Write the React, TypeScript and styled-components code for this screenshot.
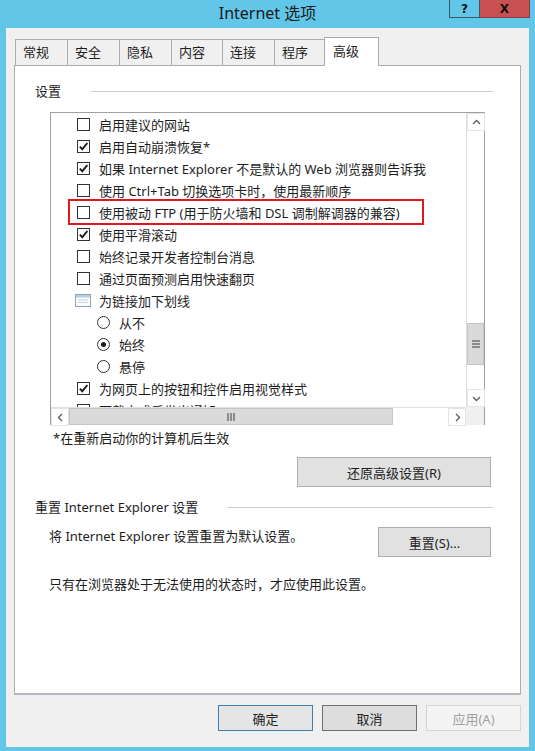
import React from "react";
import styled, { createGlobalStyle, css } from "styled-components";

const GlobalStyle = createGlobalStyle`
  html, body {
    margin: 0;
    padding: 0;
    background: #62c6e9;
  }
  body {
    font-family: "Noto Sans", "Noto Sans CJK SC", sans-serif;
    font-size: 13px;
    color: #1e1e1e;
  }
`;

const Frame = styled.div`
  width: 535px;
  height: 751px;
  background: #62c6e9;
  display: flex;
  flex-direction: column;
  overflow: hidden;
`;

const TitleBar = styled.div`
  height: 28px;
  display: grid;
  grid-template-columns: 1fr auto 1fr;
  align-items: start;
`;

const Title = styled.div`
  grid-column: 2;
  font-size: 16px;
  line-height: 24px;
  color: #1a1a1a;
  padding-top: 1px;
`;

const CaptionButtons = styled.div`
  grid-column: 3;
  justify-self: end;
  display: flex;
  margin-right: 5px;
`;

const CaptionButton = styled.div<{ $close?: boolean }>`
  height: 18px;
  width: ${(p) => (p.$close ? "50px" : "31px")};
  box-sizing: border-box;
  display: flex;
  align-items: center;
  justify-content: center;
  font-family: "DejaVu Sans", sans-serif;
  font-weight: bold;
  font-size: 12px;
  color: #111;
  border: 1px solid #3a5a6a;
  border-top: none;
  ${(p) =>
    p.$close
      ? css`
          background: #c75050;
          border-color: #8a3a3a;
          border-left: none;
        `
      : css`
          background: #62c6e9;
        `}
`;

const Body = styled.div`
  flex: 1;
  margin: 0 6px 4px 6px;
  background: #f0f0f0;
  padding: 10px 8px 0 8px;
  display: flex;
  flex-direction: column;
`;

const TabStrip = styled.div`
  display: flex;
  align-items: flex-end;
  height: 27px;
  padding-left: 1px;
  position: relative;
  z-index: 1;
`;

const Tab = styled.div<{ $active?: boolean; $w: number }>`
  box-sizing: border-box;
  width: ${(p) => p.$w}px;
  height: 26px;
  margin-bottom: 0;
  padding-left: 7px;
  line-height: 24px;
  border: 1px solid #acacac;
  border-bottom: none;
  margin-left: -1px;
  background: #f0f0f0;
  &:first-child {
    margin-left: 0;
  }
  ${(p) =>
    p.$active &&
    css`
      height: 29px;
      background: #ffffff;
      margin-bottom: -1px;
      line-height: 26px;
      padding-left: 8px;
    `}
`;

const Panel = styled.div`
  box-sizing: border-box;
  width: 507px;
  height: 630px;
  background: #ffffff;
  border: 1px solid #adadad;
  border-bottom-color: #b8b8c0;
  border-bottom-width: 2px;
  padding: 16px 27px 0 20px;
  display: flex;
  flex-direction: column;
`;

const GroupHeader = styled.div`
  display: flex;
  align-items: center;
  line-height: 18px;
`;

const GroupRule = styled.div`
  flex: 1;
  height: 1px;
  background: #c9c9c9;
  margin-left: 30px;
`;

const ListBox = styled.div`
  box-sizing: border-box;
  width: 435px;
  height: 313px;
  margin: 12px 0 0 15px;
  border: 1px solid #a0a0a0;
  display: grid;
  grid-template-columns: 1fr 18px;
  grid-template-rows: 1fr 18px;
  background: #fff;
`;

const ListContent = styled.div`
  overflow: hidden;
  position: relative;
`;

const Row = styled.div<{ $indent?: boolean; $highlight?: boolean }>`
  height: 22px;
  display: flex;
  align-items: center;
  gap: 9px;
  padding-left: ${(p) => (p.$indent ? "46px" : "26px")};
  white-space: nowrap;
  position: relative;
  ${(p) =>
    p.$highlight &&
    css`
      &::after {
        content: "";
        position: absolute;
        left: 17px;
        width: 356px;
        top: -2px;
        bottom: -2px;
        box-sizing: border-box;
        border: 2px solid #e3161e;
      }
    `}
`;

const Box = styled.span`
  box-sizing: border-box;
  width: 13px;
  height: 13px;
  flex: none;
  border: 1px solid #333;
  background: #fff;
  display: flex;
  align-items: center;
  justify-content: center;
`;

const RadioCircle = styled.span<{ $on?: boolean }>`
  box-sizing: border-box;
  width: 13px;
  height: 13px;
  flex: none;
  border: 1px solid #333;
  border-radius: 50%;
  background: #fff;
  display: flex;
  align-items: center;
  justify-content: center;
  &::after {
    content: "";
    width: 5px;
    height: 5px;
    border-radius: 50%;
    background: ${(p) => (p.$on ? "#1e1e1e" : "transparent")};
  }
`;

const VScroll = styled.div`
  display: flex;
  flex-direction: column;
  background: #fff;
  border-left: 1px solid #e0e0e0;
`;

const HScroll = styled.div`
  display: flex;
  background: #fff;
  border-top: 1px solid #e0e0e0;
`;

const Corner = styled.div`
  background: #f0f0f0;
`;

const ArrowButton = styled.div`
  box-sizing: border-box;
  width: 18px;
  height: 18px;
  flex: none;
  background: #fff;
  border: 1px solid #e3e3e3;
  display: flex;
  align-items: center;
  justify-content: center;
`;

const Track = styled.div<{ $size: number }>`
  flex: none;
  flex-basis: ${(p) => p.$size}px;
  background: #fff;
`;

const Thumb = styled.div<{ $size: number }>`
  box-sizing: border-box;
  flex: none;
  flex-basis: ${(p) => p.$size}px;
  background: #dadada;
  border: 1px solid #c4c4c4;
  display: flex;
  align-items: center;
  justify-content: center;
`;

const Note = styled.div`
  margin: 4px 0 0 18px;
  line-height: 18px;
`;

const PushButton = styled.button<{ $w: number; $h?: number; $variant?: "focus" | "normal" | "disabled" }>`
  box-sizing: border-box;
  width: ${(p) => p.$w}px;
  height: ${(p) => p.$h ?? 30}px;
  font-family: inherit;
  font-size: 13px;
  padding: 0;
  color: #1e1e1e;
  background: #e1e1e1;
  border: 1px solid #adadad;
  ${(p) =>
    p.$variant === "focus" &&
    css`
      border-color: #3c7fb1;
      background: #e5e5e5;
    `}
  ${(p) =>
    p.$variant === "normal" &&
    css`
      border-color: #707070;
      background: #dddddd;
    `}
  ${(p) =>
    p.$variant === "disabled" &&
    css`
      border-color: #d5d5d5;
      background: #f4f4f4;
      color: #a0a0a0;
    `}
`;

const RestoreRow = styled.div`
  display: flex;
  justify-content: flex-end;
  margin: 10px 2px 0 0;
`;

const ResetHeader = styled(GroupHeader)`
  margin-top: 11px;
`;

const ResetRow = styled.div`
  display: flex;
  justify-content: space-between;
  align-items: flex-start;
  margin: 11px 2px 0 14px;
  line-height: 18px;
`;

const Hint = styled.div`
  margin: 18px 0 0 14px;
  line-height: 18px;
`;

const Footer = styled.div`
  display: flex;
  justify-content: flex-end;
  gap: 9px;
  margin-top: 10px;
  width: 507px;
`;

const Check = () => (
  <svg width="11" height="11" viewBox="0 0 11 11">
    <path d="M1.8 5.6 L4.3 8.2 L9.4 2" fill="none" stroke="#1e1e1e" strokeWidth="1.9" />
  </svg>
);

const CheckBox = ({ checked }: { checked?: boolean }) => <Box>{checked && <Check />}</Box>;

const LinkIcon = () => (
  <svg width="16" height="13" viewBox="0 0 16 13" style={{ flex: "none", marginLeft: -2, marginRight: -1 }}>
    <rect x="0.5" y="0.5" width="15" height="12" fill="#fbfcfd" stroke="#8da3b8" />
    <rect x="1" y="1" width="14" height="2.5" fill="#b9cee2" />
    <line x1="3" y1="6" x2="13" y2="6" stroke="#c9d6e2" />
    <line x1="3" y1="8.5" x2="13" y2="8.5" stroke="#c9d6e2" />
  </svg>
);

const Chevron = ({ dir }: { dir: "up" | "down" | "left" | "right" }) => {
  const d = {
    up: "M2 7 L5.5 3.5 L9 7",
    down: "M2 4 L5.5 7.5 L9 4",
    left: "M7 2 L3.5 5.5 L7 9",
    right: "M4 2 L7.5 5.5 L4 9",
  }[dir];
  return (
    <svg width="11" height="11" viewBox="0 0 11 11">
      <path d={d} fill="none" stroke="#606060" strokeWidth="1.4" />
    </svg>
  );
};

const Grip = ({ horizontal }: { horizontal?: boolean }) => (
  <svg width="8" height="8" viewBox="0 0 8 8">
    {[1, 4, 7].map((v) =>
      horizontal ? (
        <line key={v} x1={v} y1="0" x2={v} y2="8" stroke="#606060" strokeWidth="1.3" />
      ) : (
        <line key={v} x1="0" y1={v} x2="8" y2={v} stroke="#606060" strokeWidth="1.3" />
      )
    )}
  </svg>
);

type Item =
  | { kind: "check"; text: string; checked?: boolean; highlight?: boolean }
  | { kind: "radio"; text: string; checked?: boolean }
  | { kind: "group"; text: string };

const items: Item[] = [
  { kind: "check", text: "启用建议的网站" },
  { kind: "check", text: "启用自动崩溃恢复*", checked: true },
  { kind: "check", text: "如果 Internet Explorer 不是默认的 Web 浏览器则告诉我", checked: true },
  { kind: "check", text: "使用 Ctrl+Tab 切换选项卡时，使用最新顺序" },
  { kind: "check", text: "使用被动 FTP (用于防火墙和 DSL 调制解调器的兼容)", highlight: true },
  { kind: "check", text: "使用平滑滚动", checked: true },
  { kind: "check", text: "始终记录开发者控制台消息" },
  { kind: "check", text: "通过页面预测启用快速翻页" },
  { kind: "group", text: "为链接加下划线" },
  { kind: "radio", text: "从不" },
  { kind: "radio", text: "始终", checked: true },
  { kind: "radio", text: "悬停" },
  { kind: "check", text: "为网页上的按钮和控件启用视觉样式", checked: true },
  { kind: "check", text: "下载完成后发出通知" },
];

const tabs = [
  { label: "常规", w: 53 },
  { label: "安全", w: 53 },
  { label: "隐私", w: 53 },
  { label: "内容", w: 52 },
  { label: "连接", w: 53 },
  { label: "程序", w: 51 },
  { label: "高级", w: 55, active: true },
];

export default function App() {
  return (
    <Frame>
      <GlobalStyle />
      <TitleBar>
        <Title>Internet 选项</Title>
        <CaptionButtons>
          <CaptionButton>?</CaptionButton>
          <CaptionButton $close>X</CaptionButton>
        </CaptionButtons>
      </TitleBar>
      <Body>
        <TabStrip>
          {tabs.map((t) => (
            <Tab key={t.label} $w={t.w} $active={t.active}>
              {t.label}
            </Tab>
          ))}
        </TabStrip>
        <Panel>
          <GroupHeader>
            设置
            <GroupRule />
          </GroupHeader>
          <ListBox>
            <ListContent>
              {items.map((it) => {
                if (it.kind === "radio")
                  return (
                    <Row key={it.text} $indent>
                      <RadioCircle $on={it.checked} />
                      {it.text}
                    </Row>
                  );
                if (it.kind === "group")
                  return (
                    <Row key={it.text}>
                      <LinkIcon />
                      {it.text}
                    </Row>
                  );
                return (
                  <Row key={it.text} $highlight={it.highlight}>
                    <CheckBox checked={it.checked} />
                    {it.text}
                  </Row>
                );
              })}
            </ListContent>
            <VScroll>
              <ArrowButton>
                <Chevron dir="up" />
              </ArrowButton>
              <Track $size={192} />
              <Thumb $size={42}>
                <Grip />
              </Thumb>
              <Track $size={24} />
              <ArrowButton>
                <Chevron dir="down" />
              </ArrowButton>
            </VScroll>
            <HScroll>
              <ArrowButton>
                <Chevron dir="left" />
              </ArrowButton>
              <Thumb $size={324}>
                <Grip horizontal />
              </Thumb>
              <Track $size={55} />
              <ArrowButton>
                <Chevron dir="right" />
              </ArrowButton>
            </HScroll>
            <Corner />
          </ListBox>
          <Note>*在重新启动你的计算机后生效</Note>
          <RestoreRow>
            <PushButton $w={194}>还原高级设置(R)</PushButton>
          </RestoreRow>
          <ResetHeader>
            重置 Internet Explorer 设置
            <GroupRule />
          </ResetHeader>
          <ResetRow>
            将 Internet Explorer 设置重置为默认设置。
            <PushButton $w={113}>重置(S)...</PushButton>
          </ResetRow>
          <Hint>只有在浏览器处于无法使用的状态时，才应使用此设置。</Hint>
        </Panel>
        <Footer>
          <PushButton $w={95} $h={26} $variant="focus">
            确定
          </PushButton>
          <PushButton $w={95} $h={26} $variant="normal">
            取消
          </PushButton>
          <PushButton $w={95} $h={26} $variant="disabled">
            应用(A)
          </PushButton>
        </Footer>
      </Body>
    </Frame>
  );
}
